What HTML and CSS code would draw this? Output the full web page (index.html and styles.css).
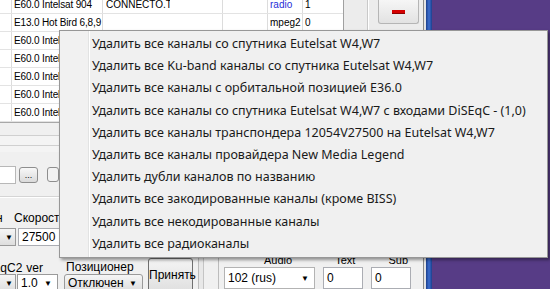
FILE: index.html
```html
<!DOCTYPE html>
<html lang="ru">
<head>
    <meta charset="UTF-8">
    <title>Каналы</title>
    <link rel="stylesheet" href="styles.css">
</head>
<body>
    <div class="app">
        <div class="main">
            <div class="top">
                <div class="grid">
                    <div class="row">
                        <div class="c c0"></div>
                        <div class="c c1">E60.0 Intelsat 904</div>
                        <div class="c c2"><span class="clip">CONNECTO.TV</span></div>
                        <div class="c c3"></div>
                        <div class="c c4 blue">radio</div>
                        <div class="c c5">1</div>
                    </div>
                    <div class="row">
                        <div class="c c0"></div>
                        <div class="c c1">E13.0 Hot Bird 6,8,9</div>
                        <div class="c c2"></div>
                        <div class="c c3"></div>
                        <div class="c c4">mpeg2</div>
                        <div class="c c5">0</div>
                    </div>
                    <div class="row">
                        <div class="c c0"></div>
                        <div class="c c1">E60.0 Intelsat 904</div>
                        <div class="c c2"></div>
                        <div class="c c3"></div>
                        <div class="c c4"></div>
                        <div class="c c5"></div>
                    </div>
                    <div class="row">
                        <div class="c c0"></div>
                        <div class="c c1">E60.0 Intelsat 904</div>
                        <div class="c c2"></div>
                        <div class="c c3"></div>
                        <div class="c c4"></div>
                        <div class="c c5"></div>
                    </div>
                    <div class="row">
                        <div class="c c0"></div>
                        <div class="c c1">E60.0 Intelsat 904</div>
                        <div class="c c2"></div>
                        <div class="c c3"></div>
                        <div class="c c4"></div>
                        <div class="c c5"></div>
                    </div>
                    <div class="row">
                        <div class="c c0"></div>
                        <div class="c c1">E60.0 Intelsat 904</div>
                        <div class="c c2"></div>
                        <div class="c c3"></div>
                        <div class="c c4"></div>
                        <div class="c c5"></div>
                    </div>
                    <div class="row">
                        <div class="c c0"></div>
                        <div class="c c1">E60.0 Intelsat 904</div>
                        <div class="c c2"></div>
                        <div class="c c3"></div>
                        <div class="c c4"></div>
                        <div class="c c5"></div>
                    </div>
                </div>
                <div class="side">
                    <div class="side-line"></div>
                    <button class="minus-btn"><span class="minus"></span></button>
                </div>
            </div>

            <div class="bands">
                <div class="band"></div>
                <div class="band short"></div>
            </div>

            <div class="path-row">
                <div class="path-field"></div>
                <button class="dots-btn">...</button>
                <span class="check"></span>
            </div>

            <div class="tune">
                <div class="tune-labels">
                    <span class="lbl-cut">н</span>
                    <span class="lbl-speed">Скорость</span>
                </div>
                <div class="tune-fields">
                    <div class="combo small"><span class="arrow">▼</span></div>
                    <div class="field speed">27500</div>
                </div>
            </div>

            <div class="bottom">
                <div class="bottom-left">
                    <div class="opt">
                        <div class="opt-labels">
                            <span class="l-diseqc">DiSEqC2</span>
                            <span class="l-ver">ver</span>
                        </div>
                        <div class="opt-fields">
                            <div class="combo small"><span class="arrow">▼</span></div>
                            <div class="combo ver"><span>1.0</span><span class="arrow">▼</span></div>
                        </div>
                    </div>
                    <div class="pos">
                        <span class="l-pos">Позиционер</span>
                        <div class="combo posc"><span>Отключен</span><span class="arrow">▼</span></div>
                    </div>
                    <button class="apply">Принять</button>
                </div>
                <div class="panel-edge"></div>
                <div class="audio">
                    <div class="audio-labels">
                        <span class="a-lbl a-audio">Audio</span>
                        <span class="a-lbl a-text">Text</span>
                        <span class="a-lbl a-sub">Sub</span>
                    </div>
                    <div class="audio-fields">
                        <div class="combo track"><span>102 (rus)</span><span class="arrow">▼</span></div>
                        <div class="field num">0</div>
                        <div class="field num">0</div>
                    </div>
                </div>
            </div>
        </div>
        <div class="split"></div>
        <div class="scroll"></div>
        <div class="desktop"></div>

        <ul class="menu">
            <li>Удалить все каналы со спутника Eutelsat W4,W7</li>
            <li>Удалить все Ku-band каналы со спутника Eutelsat W4,W7</li>
            <li>Удалить все каналы с орбитальной позицией E36.0</li>
            <li>Удалить все каналы со спутника Eutelsat W4,W7 с входами DiSEqC - (1,0)</li>
            <li>Удалить все каналы транспондера 12054V27500 на Eutelsat W4,W7</li>
            <li>Удалить все каналы провайдера New Media Legend</li>
            <li>Удалить дубли каналов по названию</li>
            <li>Удалить все закодированные каналы (кроме BISS)</li>
            <li>Удалить все некодированные каналы</li>
            <li>Удалить все радиоканалы</li>
        </ul>
    </div>
</body>
</html>
```

FILE: styles.css
```css
body {
    margin: 0;
    background: #f0f0f0;
    font-family: "Liberation Sans", Arial, sans-serif;
    font-size: 11px;
    color: #000;
}
.app {
    position: relative;
    display: flex;
    width: 550px;
    height: 289px;
    overflow: hidden;
}
.main {
    width: 423px;
    display: flex;
    flex-direction: column;
    background: #f0f0f0;
}
.main > div {
    flex-shrink: 0;
}
.split {
    width: 2px;
    background: #e4e4e4;
    border-left: 1px solid #8a8a8a;
}
.scroll {
    width: 6px;
    background: linear-gradient(90deg, #1c3f8c, #3c6fd0 50%, #1c3f8c);
}
.desktop {
    flex: 1;
    background: #573c86;
}

/* channel list */
.top {
    display: flex;
    height: 122px;
    overflow: hidden;
}
.grid {
    width: 343px;
    margin-top: -4px;
    background: #fff;
    border-right: 1px solid #a0a0a0;
}
.row {
    display: flex;
    height: 18px;
    border-bottom: 1px solid #e3e3e3;
    box-sizing: border-box;
}
.c {
    border-right: 1px solid #dcdcdc;
    padding-left: 2px;
    line-height: 18px;
    font-size: 10px;
    white-space: nowrap;
    overflow: hidden;
    box-sizing: border-box;
}
.c0 { width: 12px; }
.c1 { width: 91px; letter-spacing: -0.15px; }
.c2 { width: 120px; padding-left: 3px; }
.c3 { width: 45px; }
.c4 { width: 35px; }
.c5 { width: 40px; border-right: none; }
.clip {
    display: inline-block;
    width: 64px;
    overflow: hidden;
    vertical-align: top;
}
.blue { color: #1f2fd8; }

.side {
    flex: 1;
    display: flex;
    align-items: flex-start;
    background: #ececec;
}
.side-line {
    width: 23px;
    height: 100%;
    border-right: 1px solid #c9c9c9;
    box-shadow: 1px 0 0 #fff;
}
.minus-btn {
    margin: 0 0 0 10px;
    width: 41px;
    height: 24px;
    border: 1px solid #b5b5b5;
    border-top: none;
    border-radius: 0 0 3px 3px;
    background: linear-gradient(#f6f6f6, #e2e2e2);
    display: flex;
    align-items: center;
    justify-content: center;
    padding: 0;
}
.minus {
    width: 13px;
    height: 3px;
    background: #d40000;
    box-shadow: 0 1px 0 #8a0000;
}

/* lower part */
.bands {
    height: 30px;
    padding-top: 12px;
    border-top: 1px solid #a8a8a8;
    box-sizing: border-box;
}
.band {
    height: 10px;
    border-top: 1px solid #d0d0d0;
    background: #f4f4f4;
    box-sizing: border-box;
}
.band.short {
    height: 7px;
}
.path-row {
    height: 38px;
    display: flex;
    align-items: center;
    padding-top: 7px;
    box-sizing: border-box;
}
.path-field {
    width: 15px;
    height: 16px;
    background: #fff;
    border: 1px solid #b8b8b8;
    border-left: none;
}
.dots-btn {
    margin-left: 3px;
    width: 19px;
    height: 16px;
    padding: 0;
    font-size: 9px;
    line-height: 8px;
    border: 1px solid #8e8e8e;
    border-radius: 3px;
    background: linear-gradient(#f8f8f8, #dadada);
    font-family: "Liberation Sans", Arial, sans-serif;
}
.check {
    margin-left: 9px;
    width: 10px;
    height: 13px;
    border: 1px solid #8e8e8e;
    border-radius: 3px;
    background: #f2f2f2;
}
.tune {
    height: 60px;
    border-top: 1px solid #d5d5d5;
    box-shadow: inset 0 1px 0 #fff;
    margin-top: 6px;
    box-sizing: border-box;
    font-size: 12px;
}
.tune-labels {
    display: flex;
    height: 17px;
    margin-top: 12px;
    align-items: center;
}
.lbl-cut {
    width: 18px;
    margin-left: -4px;
}
.tune-fields {
    display: flex;
    gap: 2px;
    margin-top: 2px;
}
.combo {
    display: flex;
    align-items: center;
    justify-content: space-between;
    height: 18px;
    border: 1px solid #9a9a9a;
    background: linear-gradient(#f6f6f6, #dedede);
    box-sizing: border-box;
    padding: 0 3px;
    font-size: 12px;
}
.combo.small {
    width: 16px;
    border-left: none;
    padding: 0;
    justify-content: flex-end;
}
.arrow {
    font-size: 8px;
    padding-right: 2px;
}
.field {
    height: 18px;
    background: #fff;
    border: 1px solid #abadb3;
    box-sizing: border-box;
    padding-left: 3px;
    line-height: 16px;
    font-size: 12px;
}
.speed { width: 120px; }

.bottom {
    flex: 1;
    min-height: 0;
    display: flex;
    overflow: hidden;
}
.bottom-left {
    width: 198px;
    display: flex;
    align-items: flex-start;
    font-size: 12px;
}
.opt {
    width: 62px;
    padding-top: 5px;
}
.opt-labels {
    display: flex;
    height: 13px;
    align-items: center;
    margin-left: -27px;
    gap: 4px;
}
.opt-fields {
    display: flex;
    gap: 1px;
    margin-top: 0;
}
.combo.ver {
    width: 41px;
    background: #fff;
}
.pos {
    display: flex;
    flex-direction: column;
    padding-top: 5px;
    margin-left: 2px;
}
.l-pos {
    height: 13px;
    line-height: 13px;
    margin-left: 2px;
}
.combo.posc {
    width: 79px;
    margin-top: 0;
    border-radius: 3px;
}
.apply {
    margin: 2px 0 0 5px;
    width: 45px;
    height: 40px;
    padding: 0 0 6px;
    border: 1px solid #707070;
    border-radius: 3px;
    background: linear-gradient(#f4f4f4, #dcdcdc);
    font-family: "Liberation Sans", Arial, sans-serif;
    font-size: 12px;
}
.panel-edge {
    width: 19px;
    border-left: 1px solid #bcbcbc;
    border-right: 1px solid #bcbcbc;
    box-shadow: inset 4px 0 0 #e8e8e8, inset 5px 0 0 #c4c4c4;
}
.audio {
    flex: 1;
    padding-left: 5px;
}
.audio-labels {
    height: 11px;
    line-height: 8px;
    overflow: hidden;
}
.a-lbl {
    display: inline-block;
    font-size: 11px;
}
.a-audio { margin-left: 40px; }
.a-text { margin-left: 40px; }
.a-sub { margin-left: 30px; }
.audio-fields {
    display: flex;
    gap: 8px;
}
.combo.track {
    width: 91px;
    height: 22px;
    background: #fff;
    border-color: #b3b3b3;
}
.field.num {
    width: 40px;
    height: 22px;
    line-height: 20px;
}

/* context menu */
.menu {
    position: absolute;
    left: 59px;
    top: 30px;
    width: 489px;
    margin: 0;
    padding: 2px 0;
    list-style: none;
    box-sizing: border-box;
    border: 1px solid #979797;
    background: linear-gradient(90deg, #f1f1f1 28px, #e2e3e3 28px, #e2e3e3 29px, #fff 29px, #fff 30px, #f0f0f0 30px);
    box-shadow: 2px 2px 3px rgba(0, 0, 0, 0.4);
    font-family: "Noto Sans", sans-serif;
    font-size: 12.5px;
    color: #1a1a1a;
}
.menu li {
    height: 22.2px;
    line-height: 22px;
    padding-left: 32px;
    white-space: nowrap;
}
```
